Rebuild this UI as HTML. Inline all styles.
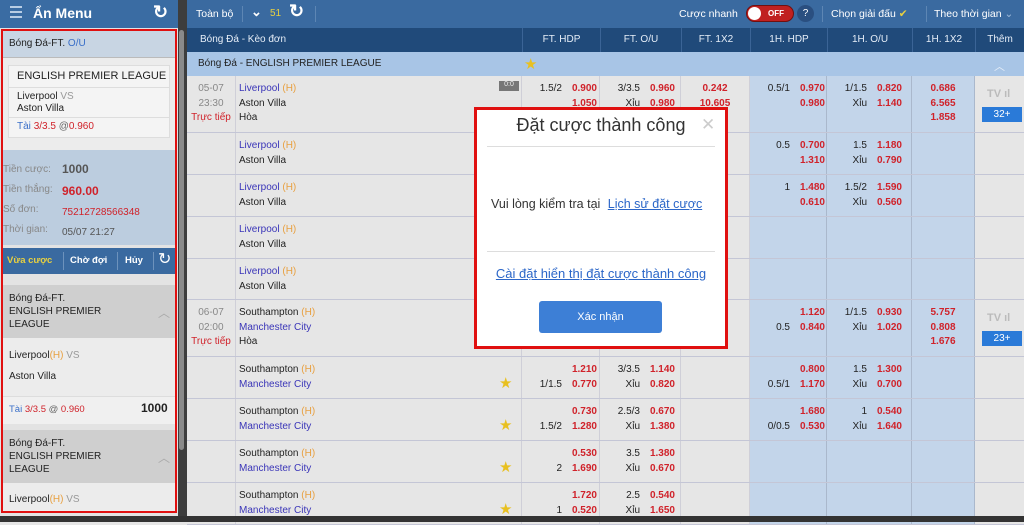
<!DOCTYPE html>
<html><head><meta charset="utf-8">
<style>
*{margin:0;padding:0;box-sizing:border-box}
body{width:1024px;height:522px;overflow:hidden;background:#e6e6e6;font-family:"Liberation Sans",Arial,sans-serif;font-size:10px;color:#222;position:relative}
.a{position:absolute}
.top{background:#3a6aa0;height:28px}
.hd{background:#204a7a;color:#e6eef8;font-size:10px;line-height:24px;top:28px;height:24px}
.r{position:absolute;left:187px;width:837px;border-bottom:1px solid #c4c6d6;background:#e6e6e6}
.c{position:absolute;top:0;bottom:0;padding-top:6px;line-height:14.5px}
.b{background:#c3d5ea;border-right:1px solid #aab8cc}
.g{border-right:1px solid #cfcfd8}
.l{display:flex;height:14.5px}
.h{width:40px;text-align:right;color:#222}
.o{width:30px;text-align:right;margin-left:5px;color:#d0222a;font-weight:bold}
.x{text-align:center;color:#d0222a;font-weight:bold}
.tm{color:#888;text-align:center;width:49px}
.lv{color:#d0222a;text-align:center}
.p{color:#3a35b8}.H{color:#e8a040}
.star{position:absolute;left:312px;width:16px;height:16px;color:#e8c020;font-size:15px;line-height:16px}
</style></head><body>
<!-- sidebar -->
<div class="a top" style="left:0;top:0;width:178px;background:#3a6ca3"></div>
<div class="a" style="left:10px;top:6px;width:12px;height:2px;background:#b8cde4;box-shadow:0 5px 0 #b8cde4,0 10px 0 #b8cde4"></div>
<div class="a" style="left:33px;top:5px;color:#fff;font-size:14px;font-weight:bold">Ẩn Menu</div>
<div class="a" style="left:153px;top:2px;color:#fff;font-size:18px;font-weight:bold">↻</div>
<div class="a" style="left:0;top:28px;width:178px;height:490px;background:#e3e3e3"></div>
<div class="a" style="left:2px;top:30px;width:174px;height:28px;background:#c8d5e3;border-bottom:1px solid #bbb"></div>
<div class="a" style="left:9px;top:38px;font-size:10px">Bóng Đá-FT. <span style="color:#3a6fc8">O/U</span></div>
<div class="a" style="left:2px;top:58px;width:174px;height:92px;background:#ececec"></div>
<div class="a" style="left:8px;top:65px;width:162px;height:73px;background:#f4f4f4;border:1px solid #ddd"></div>
<div class="a" style="left:17px;top:70px;font-size:11px">ENGLISH PREMIER LEAGUE</div>
<div class="a" style="left:8px;top:87px;width:162px;border-top:1px solid #ddd"></div>
<div class="a" style="left:17px;top:91px;font-size:10px;line-height:12px">Liverpool <span style="color:#999">VS</span><br>Aston Villa</div>
<div class="a" style="left:8px;top:117px;width:162px;border-top:1px solid #ddd"></div>
<div class="a" style="left:17px;top:121px;font-size:10px"><span style="color:#3a6fc8">Tài</span> <span style="color:#d0222a">3/3.5</span> <span style="color:#666">@</span><span style="color:#d0222a">0.960</span></div>
<div class="a" style="left:2px;top:150px;width:174px;height:95px;background:#bccddf"></div>
<div class="a" style="left:3px;top:160px;color:#888;line-height:20px;font-size:10px">Tiền cược:<br>Tiền thắng:<br>Số đơn:<br>Thời gian:</div>
<div class="a" style="left:62px;top:159px;line-height:20px;font-size:10px"><b style="font-size:12px;color:#555">1000</b><br><b style="font-size:12px;color:#d0222a">960.00</b><br><span style="color:#d0222a">75212728566348</span><br><span style="color:#555">05/07 21:27</span></div>
<div class="a" style="left:2px;top:248px;width:174px;height:26px;background:#3a6aa0"></div>
<div class="a" style="left:7px;top:255px;font-size:9.5px;font-weight:bold;color:#e8d040">Vừa cược</div>
<div class="a" style="left:63px;top:252px;height:18px;border-left:1px solid #6d92bc"></div>
<div class="a" style="left:70px;top:255px;font-size:9.5px;font-weight:bold;color:#fff">Chờ đợi</div>
<div class="a" style="left:117px;top:252px;height:18px;border-left:1px solid #6d92bc"></div>
<div class="a" style="left:125px;top:255px;font-size:9.5px;font-weight:bold;color:#fff">Hủy</div>
<div class="a" style="left:153px;top:252px;height:18px;border-left:1px solid #6d92bc"></div>
<div class="a" style="left:158px;top:249px;color:#fff;font-size:16px">↻</div>
<div class="a" style="left:2px;top:285px;width:174px;height:53px;background:#cfcfcf"></div>
<div class="a" style="left:9px;top:292px;font-size:10px;line-height:13px">Bóng Đá-FT.<br>ENGLISH PREMIER<br>LEAGUE</div>
<div class="a" style="left:158px;top:304px;color:#aaa;font-size:12px">︿</div>
<div class="a" style="left:2px;top:338px;width:174px;height:60px;background:#ececec"></div>
<div class="a" style="left:9px;top:350px;font-size:10px">Liverpool<span class="H">(H)</span> <span style="color:#999">VS</span></div>
<div class="a" style="left:9px;top:371px;font-size:10px">Aston Villa</div>
<div class="a" style="left:2px;top:396px;width:174px;height:28px;background:#f0f0f0;border-top:1px solid #ddd"></div>
<div class="a" style="left:9px;top:404px;font-size:9.5px"><span style="color:#3a6fc8">Tài</span> <span style="color:#d0222a">3/3.5</span> <span style="color:#666">@</span> <span style="color:#d0222a">0.960</span></div>
<div class="a" style="left:141px;top:401px;font-size:12px;font-weight:bold">1000</div>
<div class="a" style="left:2px;top:430px;width:174px;height:53px;background:#cfcfcf"></div>
<div class="a" style="left:9px;top:437px;font-size:10px;line-height:13px">Bóng Đá-FT.<br>ENGLISH PREMIER<br>LEAGUE</div>
<div class="a" style="left:158px;top:449px;color:#aaa;font-size:12px">︿</div>
<div class="a" style="left:2px;top:483px;width:174px;height:30px;background:#ececec"></div>
<div class="a" style="left:9px;top:494px;font-size:10px">Liverpool<span class="H">(H)</span> <span style="color:#999">VS</span></div>
<div class="a" style="left:1px;top:29px;width:176px;height:484px;border:2px solid #e01010"></div>
<div class="a" style="left:178px;top:0;width:9px;height:516px;background:#3d3d3d"></div>
<div class="a" style="left:179px;top:30px;width:5px;height:420px;background:#8a8a8a;border-radius:3px"></div>

<!-- top bar main -->
<div class="a top" style="left:187px;top:0;width:837px"></div>
<div class="a" style="left:196px;top:8px;color:#fff;font-size:10.5px">Toàn bộ</div>
<div class="a" style="left:242px;top:6px;height:16px;border-left:1px solid #5d86b4"></div>
<div class="a" style="left:251px;top:4px;color:#fff;font-size:13px;font-weight:bold">⌄</div>
<div class="a" style="left:270px;top:8px;color:#e8d040;font-size:10px">51</div>
<div class="a" style="left:289px;top:1px;color:#fff;font-size:18px;font-weight:bold">↻</div>
<div class="a" style="left:315px;top:6px;height:16px;border-left:1px solid #5d86b4"></div>
<div class="a" style="left:679px;top:8px;color:#fff;font-size:10.5px">Cược nhanh</div>
<div class="a" style="left:746px;top:5px;width:48px;height:17px;background:#c02020;border-radius:9px;border:1px solid #701010"></div>
<div class="a" style="left:748px;top:7px;width:13px;height:13px;background:#fff;border-radius:50%"></div>
<div class="a" style="left:768px;top:9px;color:#fff;font-size:8px;font-weight:bold">OFF</div>
<div class="a" style="left:797px;top:5px;width:17px;height:17px;background:#2a4f80;border-radius:50%;color:#fff;text-align:center;line-height:17px;font-size:10px">?</div>
<div class="a" style="left:822px;top:6px;height:16px;border-left:1px solid #5d86b4"></div>
<div class="a" style="left:831px;top:8px;color:#fff;font-size:10.5px">Chọn giải đấu <span style="color:#e8d040">✔</span></div>
<div class="a" style="left:926px;top:6px;height:16px;border-left:1px solid #5d86b4"></div>
<div class="a" style="left:934px;top:8px;color:#fff;font-size:10.5px">Theo thời gian <span style="color:#9bb8d8">⌄</span></div>

<!-- header -->
<div class="a hd" style="left:187px;width:837px"></div>
<div class="a hd" style="left:200px;color:#e6eef8">Bóng Đá - Kèo đơn</div>
<div class="a hd" style="left:522px;width:78px;text-align:center;background:none;border-left:1px solid #3b6496">FT. HDP</div>
<div class="a hd" style="left:600px;width:81px;text-align:center;background:none;border-left:1px solid #3b6496">FT. O/U</div>
<div class="a hd" style="left:681px;width:69px;text-align:center;background:none;border-left:1px solid #3b6496">FT. 1X2</div>
<div class="a hd" style="left:750px;width:77px;text-align:center;background:none;border-left:1px solid #3b6496">1H. HDP</div>
<div class="a hd" style="left:827px;width:85px;text-align:center;background:none;border-left:1px solid #3b6496">1H. O/U</div>
<div class="a hd" style="left:912px;width:63px;text-align:center;background:none;border-left:1px solid #3b6496">1H. 1X2</div>
<div class="a hd" style="left:975px;width:49px;text-align:center;background:none;border-left:1px solid #3b6496">Thêm</div>
<div class="a" style="left:187px;top:52px;width:837px;height:24px;background:#a8c5e6"></div>
<div class="a" style="left:198px;top:58px;font-size:10px">Bóng Đá - ENGLISH PREMIER LEAGUE</div>
<div class="a" style="left:524px;top:55px;color:#e8c020;font-size:15px">★</div>
<div class="a" style="left:994px;top:58px;color:#e6eef8;font-size:11px">︿</div>

<!-- rows -->
<div class="r" style="top:76px;height:57px">
 <div class="c g tm" style="left:0;width:49px">05-07<br>23:30<br><span class="lv">Trực tiếp</span></div>
 <div class="c g" style="left:49px;width:286px;padding-left:3px"><span class="p">Liverpool</span> <span class="H">(H)</span><br>Aston Villa<br>Hòa</div>
 <div class="a" style="left:312px;top:5px;width:20px;height:10px;background:#777;color:#eee;font-size:7px;text-align:center">0:0</div>
 <div class="c g" style="left:335px;width:78px"><div class="l"><span class="h">1.5/2</span><span class="o">0.900</span></div><div class="l"><span class="h"></span><span class="o">1.050</span></div></div>
 <div class="c g" style="left:413px;width:81px"><div class="l"><span class="h">3/3.5</span><span class="o">0.960</span></div><div class="l"><span class="h">Xỉu</span><span class="o">0.980</span></div></div>
 <div class="c g x" style="left:494px;width:69px">0.242<br>10.605</div>
 <div class="c b" style="left:563px;width:77px"><div class="l"><span class="h">0.5/1</span><span class="o">0.970</span></div><div class="l"><span class="h"></span><span class="o">0.980</span></div></div>
 <div class="c b" style="left:640px;width:85px"><div class="l"><span class="h">1/1.5</span><span class="o">0.820</span></div><div class="l"><span class="h">Xỉu</span><span class="o">1.140</span></div></div>
 <div class="c b x" style="left:725px;width:63px">0.686<br>6.565<br>1.858</div>
 <div class="a" style="left:800px;top:12px;color:#bbb;font-size:11px;font-weight:bold">TV ıl</div>
 <div class="a" style="left:795px;top:31px;width:40px;height:15px;background:#2a7ad8;color:#fff;text-align:center;font-size:10px;line-height:15px">32+</div>
</div>
<div class="r" style="top:133px;height:42px">
 <div class="c g" style="left:0;width:49px"></div>
 <div class="c g" style="left:49px;width:286px;padding-left:3px"><span class="p">Liverpool</span> <span class="H">(H)</span><br>Aston Villa</div>
 <div class="c g" style="left:335px;width:78px"></div><div class="c g" style="left:413px;width:81px"></div><div class="c g" style="left:494px;width:69px"></div>
 <div class="c b" style="left:563px;width:77px"><div class="l"><span class="h">0.5</span><span class="o">0.700</span></div><div class="l"><span class="h"></span><span class="o">1.310</span></div></div>
 <div class="c b" style="left:640px;width:85px"><div class="l"><span class="h">1.5</span><span class="o">1.180</span></div><div class="l"><span class="h">Xỉu</span><span class="o">0.790</span></div></div>
 <div class="c b" style="left:725px;width:63px"></div>
</div>
<div class="r" style="top:175px;height:42px">
 <div class="c g" style="left:0;width:49px"></div>
 <div class="c g" style="left:49px;width:286px;padding-left:3px"><span class="p">Liverpool</span> <span class="H">(H)</span><br>Aston Villa</div>
 <div class="c g" style="left:335px;width:78px"></div><div class="c g" style="left:413px;width:81px"></div><div class="c g" style="left:494px;width:69px"></div>
 <div class="c b" style="left:563px;width:77px"><div class="l"><span class="h">1</span><span class="o">1.480</span></div><div class="l"><span class="h"></span><span class="o">0.610</span></div></div>
 <div class="c b" style="left:640px;width:85px"><div class="l"><span class="h">1.5/2</span><span class="o">1.590</span></div><div class="l"><span class="h">Xỉu</span><span class="o">0.560</span></div></div>
 <div class="c b" style="left:725px;width:63px"></div>
</div>
<div class="r" style="top:217px;height:42px">
 <div class="c g" style="left:0;width:49px"></div>
 <div class="c g" style="left:49px;width:286px;padding-left:3px"><span class="p">Liverpool</span> <span class="H">(H)</span><br>Aston Villa</div>
 <div class="c g" style="left:335px;width:78px"></div><div class="c g" style="left:413px;width:81px"></div><div class="c g" style="left:494px;width:69px"></div>
 <div class="c b" style="left:563px;width:77px"></div><div class="c b" style="left:640px;width:85px"></div><div class="c b" style="left:725px;width:63px"></div>
</div>
<div class="r" style="top:259px;height:41px">
 <div class="c g" style="left:0;width:49px"></div>
 <div class="c g" style="left:49px;width:286px;padding-left:3px"><span class="p">Liverpool</span> <span class="H">(H)</span><br>Aston Villa</div>
 <div class="c g" style="left:335px;width:78px"></div><div class="c g" style="left:413px;width:81px"></div><div class="c g" style="left:494px;width:69px"></div>
 <div class="c b" style="left:563px;width:77px"></div><div class="c b" style="left:640px;width:85px"></div><div class="c b" style="left:725px;width:63px"></div>
</div>
<div class="r" style="top:300px;height:57px">
 <div class="c g tm" style="left:0;width:49px">06-07<br>02:00<br><span class="lv">Trực tiếp</span></div>
 <div class="c g" style="left:49px;width:286px;padding-left:3px">Southampton <span class="H">(H)</span><br><span class="p">Manchester City</span><br>Hòa</div>
 <div class="c g" style="left:335px;width:78px"></div><div class="c g" style="left:413px;width:81px"></div><div class="c g" style="left:494px;width:69px"></div>
 <div class="c b" style="left:563px;width:77px"><div class="l"><span class="h"></span><span class="o">1.120</span></div><div class="l"><span class="h">0.5</span><span class="o">0.840</span></div></div>
 <div class="c b" style="left:640px;width:85px"><div class="l"><span class="h">1/1.5</span><span class="o">0.930</span></div><div class="l"><span class="h">Xỉu</span><span class="o">1.020</span></div></div>
 <div class="c b x" style="left:725px;width:63px">5.757<br>0.808<br>1.676</div>
 <div class="a" style="left:800px;top:12px;color:#bbb;font-size:11px;font-weight:bold">TV ıl</div>
 <div class="a" style="left:795px;top:31px;width:40px;height:15px;background:#2a7ad8;color:#fff;text-align:center;font-size:10px;line-height:15px">23+</div>
</div>
<div class="r" style="top:357px;height:42px">
 <div class="c g" style="left:0;width:49px"></div>
 <div class="c g" style="left:49px;width:286px;padding-left:3px">Southampton <span class="H">(H)</span><br><span class="p">Manchester City</span></div>
 <div class="star" style="top:19px">★</div>
 <div class="c g" style="left:335px;width:78px"><div class="l"><span class="h"></span><span class="o">1.210</span></div><div class="l"><span class="h">1/1.5</span><span class="o">0.770</span></div></div>
 <div class="c g" style="left:413px;width:81px"><div class="l"><span class="h">3/3.5</span><span class="o">1.140</span></div><div class="l"><span class="h">Xỉu</span><span class="o">0.820</span></div></div>
 <div class="c g" style="left:494px;width:69px"></div>
 <div class="c b" style="left:563px;width:77px"><div class="l"><span class="h"></span><span class="o">0.800</span></div><div class="l"><span class="h">0.5/1</span><span class="o">1.170</span></div></div>
 <div class="c b" style="left:640px;width:85px"><div class="l"><span class="h">1.5</span><span class="o">1.300</span></div><div class="l"><span class="h">Xỉu</span><span class="o">0.700</span></div></div>
 <div class="c b" style="left:725px;width:63px"></div>
</div>
<div class="r" style="top:399px;height:42px">
 <div class="c g" style="left:0;width:49px"></div>
 <div class="c g" style="left:49px;width:286px;padding-left:3px">Southampton <span class="H">(H)</span><br><span class="p">Manchester City</span></div>
 <div class="star" style="top:19px">★</div>
 <div class="c g" style="left:335px;width:78px"><div class="l"><span class="h"></span><span class="o">0.730</span></div><div class="l"><span class="h">1.5/2</span><span class="o">1.280</span></div></div>
 <div class="c g" style="left:413px;width:81px"><div class="l"><span class="h">2.5/3</span><span class="o">0.670</span></div><div class="l"><span class="h">Xỉu</span><span class="o">1.380</span></div></div>
 <div class="c g" style="left:494px;width:69px"></div>
 <div class="c b" style="left:563px;width:77px"><div class="l"><span class="h"></span><span class="o">1.680</span></div><div class="l"><span class="h">0/0.5</span><span class="o">0.530</span></div></div>
 <div class="c b" style="left:640px;width:85px"><div class="l"><span class="h">1</span><span class="o">0.540</span></div><div class="l"><span class="h">Xỉu</span><span class="o">1.640</span></div></div>
 <div class="c b" style="left:725px;width:63px"></div>
</div>
<div class="r" style="top:441px;height:42px">
 <div class="c g" style="left:0;width:49px"></div>
 <div class="c g" style="left:49px;width:286px;padding-left:3px">Southampton <span class="H">(H)</span><br><span class="p">Manchester City</span></div>
 <div class="star" style="top:19px">★</div>
 <div class="c g" style="left:335px;width:78px"><div class="l"><span class="h"></span><span class="o">0.530</span></div><div class="l"><span class="h">2</span><span class="o">1.690</span></div></div>
 <div class="c g" style="left:413px;width:81px"><div class="l"><span class="h">3.5</span><span class="o">1.380</span></div><div class="l"><span class="h">Xỉu</span><span class="o">0.670</span></div></div>
 <div class="c g" style="left:494px;width:69px"></div>
 <div class="c b" style="left:563px;width:77px"></div><div class="c b" style="left:640px;width:85px"></div><div class="c b" style="left:725px;width:63px"></div>
</div>
<div class="r" style="top:483px;height:42px">
 <div class="c g" style="left:0;width:49px"></div>
 <div class="c g" style="left:49px;width:286px;padding-left:3px">Southampton <span class="H">(H)</span><br><span class="p">Manchester City</span></div>
 <div class="star" style="top:19px">★</div>
 <div class="c g" style="left:335px;width:78px"><div class="l"><span class="h"></span><span class="o">1.720</span></div><div class="l"><span class="h">1</span><span class="o">0.520</span></div></div>
 <div class="c g" style="left:413px;width:81px"><div class="l"><span class="h">2.5</span><span class="o">0.540</span></div><div class="l"><span class="h">Xỉu</span><span class="o">1.650</span></div></div>
 <div class="c g" style="left:494px;width:69px"></div>
 <div class="c b" style="left:563px;width:77px"></div><div class="c b" style="left:640px;width:85px"></div><div class="c b" style="left:725px;width:63px"></div>
</div>
<div class="a" style="left:0;top:516px;width:1024px;height:6px;background:#333"></div>

<!-- modal -->
<div class="a" style="left:474px;top:107px;width:254px;height:242px;background:#fff;border:3px solid #e01010"></div>
<div class="a" style="left:474px;top:115px;width:254px;text-align:center;font-size:18px;color:#333">Đặt cược thành công</div>
<div class="a" style="left:701px;top:115px;color:#ccc;font-size:17px">✕</div>
<div class="a" style="left:487px;top:146px;width:228px;border-top:1px solid #ddd"></div>
<div class="a" style="left:491px;top:197px;font-size:12.5px;color:#333">Vui lòng kiểm tra tại <span style="color:#2b66c8;text-decoration:underline;margin-left:4px">Lịch sử đặt cược</span></div>
<div class="a" style="left:487px;top:251px;width:228px;border-top:1px solid #ddd"></div>
<div class="a" style="left:474px;top:266px;width:254px;text-align:center;font-size:13px;color:#2b66c8;text-decoration:underline">Cài đặt hiển thị đặt cược thành công</div>
<div class="a" style="left:539px;top:301px;width:123px;height:32px;background:#3d7fd6;border-radius:3px;color:#fff;text-align:center;line-height:32px;font-size:11px">Xác nhận</div>
</body></html>
